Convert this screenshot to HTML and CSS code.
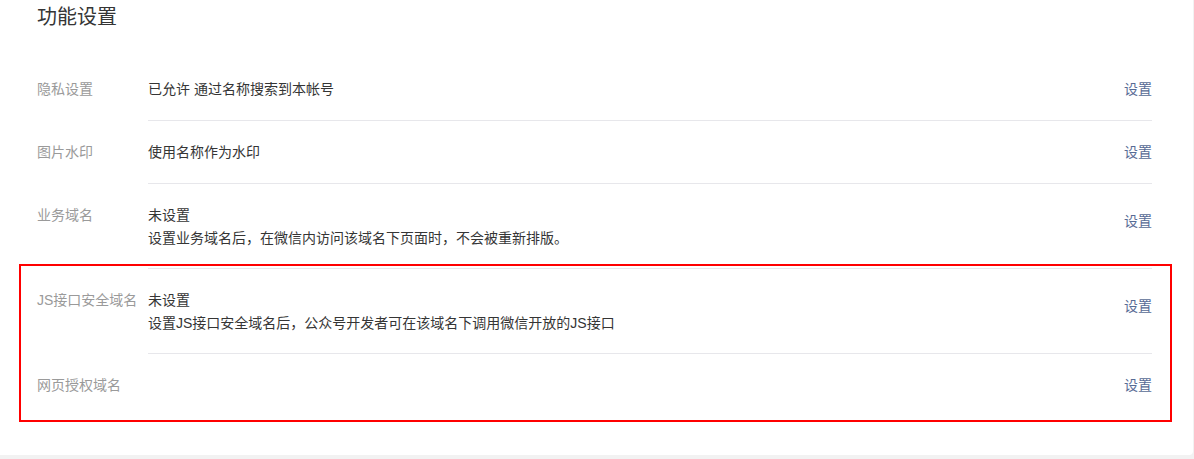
FILE: index.html
```html
<!DOCTYPE html>
<html lang="zh-CN">
<head>
    <meta charset="UTF-8">
    <meta name="viewport" content="width=device-width, initial-scale=1.0">
    <title>功能设置</title>
    <link rel="stylesheet" href="styles.css">
</head>
<body>
    <div class="card">
        <h2 class="card-title">功能设置</h2>

        <div class="setting-list">
            <div class="setting-row setting-row--first">
                <div class="setting-label">隐私设置</div>
                <div class="setting-body">
                    <div class="setting-info">已允许 通过名称搜索到本帐号</div>
                    <a href="#" class="setting-action">设置</a>
                </div>
            </div>

            <div class="setting-row">
                <div class="setting-label">图片水印</div>
                <div class="setting-body">
                    <div class="setting-info">使用名称作为水印</div>
                    <a href="#" class="setting-action">设置</a>
                </div>
            </div>

            <div class="setting-row setting-row--desc">
                <div class="setting-label">业务域名</div>
                <div class="setting-body">
                    <div class="setting-info">
                        <div>未设置</div>
                        <div class="setting-desc">设置业务域名后，在微信内访问该域名下页面时，不会被重新排版。</div>
                    </div>
                    <a href="#" class="setting-action">设置</a>
                </div>
            </div>

            <!-- zone encadrée en rouge -->
            <div class="highlight">
                <div class="setting-row setting-row--desc">
                    <div class="setting-label">JS接口安全域名</div>
                    <div class="setting-body">
                        <div class="setting-info">
                            <div>未设置</div>
                            <div class="setting-desc">设置JS接口安全域名后，公众号开发者可在该域名下调用微信开放的JS接口</div>
                        </div>
                        <a href="#" class="setting-action">设置</a>
                    </div>
                </div>

                <div class="setting-row">
                    <div class="setting-label">网页授权域名</div>
                    <div class="setting-body">
                        <div class="setting-info"></div>
                        <a href="#" class="setting-action">设置</a>
                    </div>
                </div>
            </div>
        </div>
    </div>
</body>
</html>
```

FILE: styles.css
```css
body {
    font-family: "Liberation Sans", "Noto Sans CJK SC", sans-serif;
    font-size: 14px;
    background-color: #f2f2f2;
    color: #353535;
    margin: 0;
}
.card {
    width: 1193px;
    box-sizing: border-box;
    background-color: #fff;
    border-radius: 0 0 4px 0;
    padding: 3px 41px 39px 37px;
}
.card-title {
    font-size: 20px;
    font-weight: normal;
    line-height: 28px;
    margin: 0 0 27px;
    color: #353535;
}
.setting-row {
    display: flex;
    line-height: 22px;
}
.setting-label {
    width: 111px;
    flex-shrink: 0;
    padding-top: 21px;
    color: #9a9a9a;
    white-space: nowrap;
}
.setting-body {
    flex: 1;
    display: flex;
    align-items: center;
    justify-content: space-between;
    border-top: 1px solid #e7e7eb;
    padding: 20px 0;
}
.setting-row--first .setting-label {
    padding-top: 20px;
}
.setting-row--first .setting-body {
    border-top: none;
}
.setting-row--desc .setting-body {
    padding-bottom: 19px;
}
.setting-desc {
    margin-top: 1px;
}
.setting-action {
    color: #576b95;
    text-decoration: none;
}
.setting-row--desc .setting-action {
    margin-bottom: 11px;
}
.highlight {
    position: relative;
}
.highlight::after {
    content: "";
    position: absolute;
    top: -4px;
    left: -18px;
    right: -20px;
    bottom: -6px;
    border: 2px solid #ff0000;
    pointer-events: none;
}
```
